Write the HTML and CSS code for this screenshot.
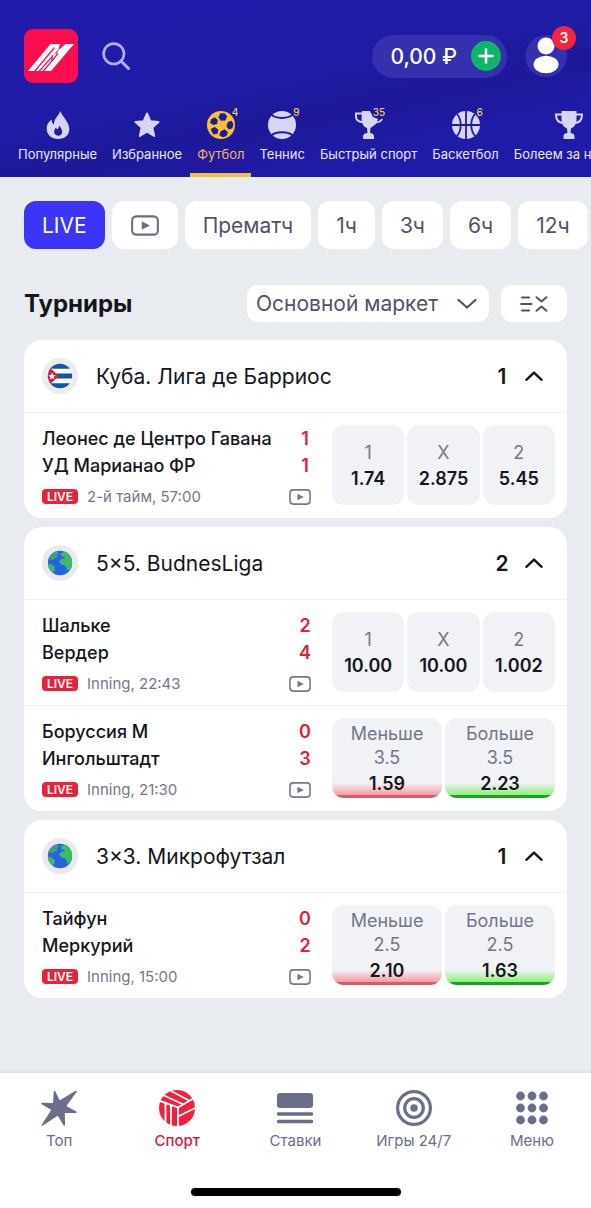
FILE: index.html
```html
<!DOCTYPE html>
<html lang="ru">
<head>
<meta charset="utf-8">
<meta name="viewport" content="width=device-width, initial-scale=1">
<title>Спорт</title>
<link rel="stylesheet" href="styles.css">
</head>
<body>
<svg class="sprite" aria-hidden="true">
  <symbol id="video" viewBox="0 0 30 22">
    <rect x="1.2" y="1.2" width="27.6" height="19.6" rx="4.5" fill="none" stroke="currentColor" stroke-width="2.200"/>
    <path d="M11.5 6.500l8.800 4.500-8.800 4.500z" fill="currentColor"/>
  </symbol>
  <symbol id="up" viewBox="0 0 20 12">
    <path d="M1.500 10.200L10 2.200l8.500 8" fill="none" stroke="currentColor" stroke-width="2.600" stroke-linecap="round" stroke-linejoin="round"/>
  </symbol>
  <symbol id="globe" viewBox="0 0 36 36">
    <circle cx="18" cy="18" r="18" fill="#e8eaf0"/>
    <circle cx="18" cy="18" r="12.200" fill="#2563e2"/>
    <path d="M7.500 12C9.500 8.500 12 6.800 14.500 6.300l2.500 1.500-2 2.400.6 2-2.900 1.200-1.600 1.600-2.600.5z" fill="#3f9f86"/>
    <path d="M18.500 8.500l5-2c3.500 1.800 6.200 5.500 6.600 10l-.4 4.500-2.200 4-2.300.6-.8-3.400-2.200-1.900-3.400-.8-1.700-2.900 2-2.600 3.700-.5-.5-1.700-2.600-.2z" fill="#3fbb66"/>
    <path d="M6 18.500l3.600.8 3.200 3-.2 3.200-1.600 2.200C8 26 6 22.500 6 18.500z" fill="#3fbb66"/>
  </symbol>
</svg>

<header class="top">
  <div class="top__bar">
    <a class="logo" href="#" aria-label="Главная">
      <svg viewBox="0 0 54 54">
        <path d="M4 42L26.500 15H36l-2 6.500L41.500 15H50L27 42z" fill="#fff"/>
        <path d="M10.500 42.500L30.500 18.500M19 42.500l15-18M15 42.500L28.500 27l-1 5M34 21.500L31.500 25" fill="none" stroke="#fc0d50" stroke-width="1.200"/>
      </svg>
    </a>
    <button class="search" aria-label="Поиск">
      <svg viewBox="0 0 28 28"><circle cx="11.800" cy="11.800" r="10.200" fill="none" stroke="currentColor" stroke-width="2.600"/><path d="M19 19l7.500 7.500" stroke="currentColor" stroke-width="3" stroke-linecap="round"/></svg>
    </button>
    <button class="balance">
      <span>0,00 ₽</span>
      <svg viewBox="0 0 30 30"><circle cx="15" cy="15" r="15" fill="#10b56c"/><path d="M15 8.500v13M8.500 15h13" stroke="#fff" stroke-width="2.600" stroke-linecap="round"/></svg>
    </button>
    <button class="profile" aria-label="Профиль">
      <svg viewBox="0 0 42 42"><circle cx="21" cy="11" r="8.500" fill="#fff"/><ellipse cx="21" cy="29.500" rx="12.500" ry="8.800" fill="#fff"/></svg>
      <span class="profile__badge">3</span>
    </button>
  </div>
  <nav class="sports">
    <a class="sport" href="#"><span class="sport__icon">
      <svg viewBox="0 0 28 28"><path fill="currentColor" fill-rule="evenodd" d="M16.500 0C16.800 4 24.800 10 25.300 17.500 25.700 24 20.500 28 14 28S2.300 23.500 2.700 17C3 12.500 5.500 10.200 7.700 8.800c.1 2.700.8 4 2.200 4.700C10 8 13.700 5.500 16.500 0zM15.200 14.800c-.3 1.800-1.200 2.700-1.700 3.700-.8-.5-1.200-1.100-1.400-2-2.800 2.200-2.800 7.700 2 8.200 4.800 0 5.500-5.500 1.100-9.900z"/></svg></span>Популярные</a>
    <a class="sport" href="#"><span class="sport__icon">
      <svg viewBox="0 0 28 28"><path fill="currentColor" stroke="currentColor" stroke-width="2" stroke-linejoin="round" d="M14 2.500l3.300 7.700 8.200.8-6.200 5.500 1.900 8.500L14 20.600 6.800 25l1.900-8.500L2.500 11l8.200-.8z"/></svg></span>Избранное</a>
    <a class="sport sport--active" href="#"><span class="sport__icon">
      <svg viewBox="0 0 28 28"><circle cx="14" cy="14" r="14" fill="currentColor"/><g fill="#1e1a9d"><path d="M13 2.400l4.600-.2 2.700 3-1.900 4.200-4.400.3-2.600-3.300z"/><path d="M4.200 8.200l3.700-2 2.900 2.700-.7 4.200-4 1-3-2.400z"/><path d="M3.600 18l4.300-2 3.400 2.800-.8 4-4.200.7z"/><path d="M13.500 20.500l4-2.200 3.500 3-1.600 4-4.300 1-2.800-2.400z"/><path d="M20.800 11l3.600-1.300 2 3.300-1 4.200-3.600 1.300-2.300-3z"/></g></svg><sup>4</sup></span>Футбол</a>
    <a class="sport" href="#"><span class="sport__icon">
      <svg viewBox="0 0 28 28"><circle cx="14" cy="14" r="14" fill="currentColor"/><path d="M3.500 3.500C7 8 21 8 24.500 3.500M3.500 24.500C7 20 21 20 24.500 24.500" fill="none" stroke="#201ba5" stroke-width="2"/></svg><sup>9</sup></span>Теннис</a>
    <a class="sport" href="#"><span class="sport__icon">
      <svg viewBox="0 0 28 28"><path fill="currentColor" d="M7 0h8l3 6 5 2-2 5-5.500 4-.5 5c2.500 0 4 1.500 4 3.500V28H8v-2.500C8 23.500 10 22 12.500 22l-.5-5C9 16 7 13 6.500 9z"/><path d="M7 2.500H1v3.300c0 3 2.500 5 7 5.500M20 11.500c4 0 6-1 7-3.500" fill="none" stroke="currentColor" stroke-width="2"/></svg><sup>35</sup></span>Быстрый спорт</a>
    <a class="sport" href="#"><span class="sport__icon">
      <svg viewBox="0 0 28 28"><circle cx="14" cy="14" r="14" fill="currentColor"/><path d="M14 0v28M0 14h28M5 3c5 6 5 16 0 22M23 3c-5 6-5 16 0 22" fill="none" stroke="#201ba5" stroke-width="1.800"/></svg><sup>6</sup></span>Баскетбол</a>
    <a class="sport" href="#"><span class="sport__icon">
      <svg viewBox="0 0 28 28"><path fill="currentColor" d="M6.500 0h15v8c0 5-2 8-5.500 9.500l-.5 4.500c2.500 0 4 1.500 4 3.500V28h-11v-2.500c0-2 1.500-3.500 4-3.500l-.5-4.500C8.500 16 6.500 13 6.500 8z"/><path d="M7 3.500H1c0 5 1.500 8.500 8 8.500M21 3.500h6c0 5-1.500 8.500-8 8.500" fill="none" stroke="currentColor" stroke-width="2"/></svg></span>Болеем за наших</a>
  </nav>
</header>

<main class="content">
  <div class="chips">
    <button class="chip chip--active">LIVE</button>
    <button class="chip chip--icon" aria-label="Видео"><svg class="chip__video"><use href="#video"/></svg></button>
    <button class="chip">Прематч</button>
    <button class="chip">1ч</button>
    <button class="chip">3ч</button>
    <button class="chip">6ч</button>
    <button class="chip">12ч</button>
  </div>

  <div class="heading">
    <h1>Турниры</h1>
    <div class="market">
      <select aria-label="Маркет"><option>Основной маркет</option></select>
      <svg viewBox="0 0 20 12"><path d="M1.500 2L10 9.500 18.500 2" fill="none" stroke="currentColor" stroke-width="2.200" stroke-linecap="round" stroke-linejoin="round"/></svg>
    </div>
    <button class="collapse" aria-label="Свернуть все">
      <svg viewBox="0 0 28 18"><path d="M2 2.500h7M1 9h10.500M2 15.500h7M16.500 2.200l5 4.300 5-4.300M16.500 15.800l5-4.300 5 4.300" fill="none" stroke="currentColor" stroke-width="2" stroke-linecap="round" stroke-linejoin="round"/></svg>
    </button>
  </div>

  <section class="card">
    <button class="card__head">
      <svg class="card__flag" viewBox="0 0 36 36"><clipPath id="disc"><circle cx="18" cy="18" r="12.200"/></clipPath><circle cx="18" cy="18" r="18" fill="#ececed"/><g clip-path="url(#disc)"><path fill="#fff" d="M5 5h26v26H5z"/><path fill="#1554ab" d="M5 5h26v5.700H5zM5 15.500h26v5H5zM5 25.300h26V31H5z"/><path fill="#dc1f3a" d="M5 7l12 11L5 29z"/><path fill="#fff" d="M10 14.500l1 2.500 2.700.2-2.100 1.700.7 2.600-2.300-1.400-2.300 1.400.7-2.600-2.100-1.700 2.700-.2z"/></g></svg>
      <span class="card__title">Куба. Лига де Барриос</span><b>1</b><svg class="card__arrow"><use href="#up"/></svg>
    </button>
    <article class="match">
      <div class="match__info">
        <div class="team"><span>Леонес де Центро Гавана</span><b>1</b></div>
        <div class="team"><span>УД Марианао ФР</span><b>1</b></div>
        <div class="status"><i>LIVE</i><span>2-й тайм, 57:00</span><svg><use href="#video"/></svg></div>
      </div>
      <div class="odds">
        <button class="odd"><span>1</span><b>1.74</b></button>
        <button class="odd"><span>X</span><b>2.875</b></button>
        <button class="odd"><span>2</span><b>5.45</b></button>
      </div>
    </article>
  </section>

  <section class="card">
    <button class="card__head">
      <svg class="card__flag"><use href="#globe"/></svg>
      <span class="card__title">5×5. BudnesLiga</span><b>2</b><svg class="card__arrow"><use href="#up"/></svg>
    </button>
    <article class="match">
      <div class="match__info">
        <div class="team"><span>Шальке</span><b>2</b></div>
        <div class="team"><span>Вердер</span><b>4</b></div>
        <div class="status"><i>LIVE</i><span>Inning, 22:43</span><svg><use href="#video"/></svg></div>
      </div>
      <div class="odds">
        <button class="odd"><span>1</span><b>10.00</b></button>
        <button class="odd"><span>X</span><b>10.00</b></button>
        <button class="odd"><span>2</span><b>1.002</b></button>
      </div>
    </article>
    <article class="match">
      <div class="match__info">
        <div class="team"><span>Боруссия М</span><b>0</b></div>
        <div class="team"><span>Ингольштадт</span><b>3</b></div>
        <div class="status"><i>LIVE</i><span>Inning, 21:30</span><svg><use href="#video"/></svg></div>
      </div>
      <div class="odds">
        <button class="odd odd--down"><span>Меньше</span><span>3.5</span><b>1.59</b></button>
        <button class="odd odd--up"><span>Больше</span><span>3.5</span><b>2.23</b></button>
      </div>
    </article>
  </section>

  <section class="card">
    <button class="card__head">
      <svg class="card__flag"><use href="#globe"/></svg>
      <span class="card__title">3×3. Микрофутзал</span><b>1</b><svg class="card__arrow"><use href="#up"/></svg>
    </button>
    <article class="match">
      <div class="match__info">
        <div class="team"><span>Тайфун</span><b>0</b></div>
        <div class="team"><span>Меркурий</span><b>2</b></div>
        <div class="status"><i>LIVE</i><span>Inning, 15:00</span><svg><use href="#video"/></svg></div>
      </div>
      <div class="odds">
        <button class="odd odd--down"><span>Меньше</span><span>2.5</span><b>2.10</b></button>
        <button class="odd odd--up"><span>Больше</span><span>2.5</span><b>1.63</b></button>
      </div>
    </article>
  </section>
</main>

<footer class="bottom">
  <nav class="tabs">
    <a class="tab" href="#"><svg viewBox="0 0 36 36"><path fill="currentColor" stroke="currentColor" stroke-width="1.500" stroke-linejoin="round" d="M13.500 1.500l5 10L35 1.500 24.200 16.200l10.800 6-12 .1.300 12.700-6.300-10.300L1.500 35l9.800-15.300L1 13.500l11.700.3z"/></svg>Топ</a>
    <a class="tab tab--active" href="#"><svg viewBox="0 0 36 36"><circle cx="18" cy="18" r="18" fill="currentColor"/><path d="M1 11l18 6.500L36 7.500M19 17.500V36M5 5.500l19.500 9M12 1l19 10M12 15v20M6.500 13v20M19 26.500L36 18" fill="none" stroke="#fff" stroke-width="1.900"/></svg>Спорт</a>
    <a class="tab" href="#"><svg viewBox="0 0 36 36"><path fill="currentColor" d="M3 3h30q3 0 3 3v9q0 3-3 3H3q-3 0-3-3V6q0-3 3-3z"/><path d="M1.500 24h33M1.500 31.500h33" stroke="currentColor" stroke-width="3.500" stroke-linecap="round"/></svg>Ставки</a>
    <a class="tab" href="#"><svg viewBox="0 0 36 36"><g fill="none" stroke="currentColor" stroke-width="3.200"><circle cx="18" cy="18" r="16.400"/><circle cx="18" cy="18" r="9.300"/></g><circle cx="18" cy="18" r="3.700" fill="currentColor"/></svg>Игры 24/7</a>
    <a class="tab" href="#"><svg viewBox="0 0 36 36"><g fill="currentColor"><circle cx="6.500" cy="6" r="4.400"/><circle cx="18" cy="6" r="4.400"/><circle cx="29.500" cy="6" r="4.400"/><circle cx="6.500" cy="18" r="4.400"/><circle cx="18" cy="18" r="4.400"/><circle cx="29.500" cy="18" r="4.400"/><circle cx="6.500" cy="30" r="4.400"/><circle cx="18" cy="30" r="4.400"/><circle cx="29.500" cy="30" r="4.400"/></g></svg>Меню</a>
  </nav>
  <div class="home-bar"></div>
</footer>
</body>
</html>
```

FILE: styles.css
```css
* { box-sizing: border-box; }

body {
  margin: 0;
  min-height: 100vh;
  display: flex;
  flex-direction: column;
  background: #e8ebef;
  color: #15161b;
  font-family: Inter, "Noto Sans", sans-serif;
}

button, select {
  margin: 0;
  padding: 0;
  border: 0;
  background: none;
  color: inherit;
  font: inherit;
  cursor: pointer;
}

a { color: inherit; text-decoration: none; }
svg { display: block; flex: none; }
.sprite { position: absolute; width: 0; height: 0; }

/* Header */
.top {
  background: linear-gradient(168deg, #201ca9 0%, #201ca8 40%, #1d1999 60%, #201ba6 78%);
  color: #fff;
}

.top__bar {
  display: flex;
  align-items: center;
  padding: 29px 24px 0;
}

.logo {
  border-radius: 9px;
  background: #fc0d50;
}
.logo svg { width: 54px; height: 54px; }

.search { margin: 0 auto 0 24px; color: #b2aef5; }
.search svg { width: 28px; height: 28px; }

.balance {
  display: flex;
  align-items: center;
  gap: 14px;
  height: 43px;
  padding: 0 6px 0 18px;
  border-radius: 22px;
  background: #3530ae;
  font-size: 21px;
  font-weight: 500;
}
.balance svg { width: 30px; height: 30px; }

.profile {
  position: relative;
  margin-left: 18px;
  border-radius: 50%;
  background: #3530ae;
}
.profile svg { width: 42px; height: 42px; }
.profile__badge {
  position: absolute;
  top: -9px;
  right: -9px;
  width: 24px;
  border-radius: 12px;
  background: #f2253c;
  font-size: 14px;
  font-weight: 600;
  line-height: 24px;
}

.sports {
  display: flex;
  gap: 1px;
  padding: 28px 0 0 11px;
  overflow: hidden;
}

.sport {
  display: flex;
  flex: none;
  flex-direction: column;
  align-items: center;
  gap: 6px;
  padding: 0 7px 9px;
  border-bottom: 4px solid transparent;
  color: #e8e7fa;
  font-size: 13px;
  line-height: 19px;
}
.sport--active { border-color: #f3c142; color: #f0b958; }
.sport__icon { position: relative; color: #d6d5f5; }
.sport__icon svg { width: 28px; height: 28px; }
.sport--active .sport__icon { color: #fbc22e; }
.sport sup {
  position: absolute;
  top: -5px;
  left: 25px;
  color: #f3c95c;
  font-size: 10px;
  font-weight: 500;
  line-height: 12px;
}
.sport:nth-child(5) sup { left: 18px; }

/* Content */
.content { flex: 1; padding: 24px 24px 27px; }

.chips {
  display: flex;
  gap: 7px;
  margin-right: -24px;
  overflow: hidden;
}
.chip {
  flex: none;
  height: 48px;
  padding: 0 18px;
  border-radius: 12px;
  background: #fff;
  color: #505369;
  font-size: 21px;
}
.chip--active { background: #3c34f6; color: #fff; }
.chip--icon { padding: 0 19px; }
.chip__video { width: 28px; height: 21px; color: #6a6d81; }

.heading {
  display: flex;
  align-items: center;
  gap: 12px;
  margin: 36px 0 18px;
}
.heading h1 {
  flex: 1;
  margin: 0;
  font-size: 24px;
  font-weight: 700;
  line-height: 36px;
}

.market, .collapse {
  border-radius: 11px;
  background: #fff;
  color: #505369;
}
.market { position: relative; }
.market select {
  width: 242px;
  height: 37px;
  padding: 0 9px;
  appearance: none;
  font-size: 21px;
}
.market svg {
  position: absolute;
  top: 13px;
  right: 12px;
  width: 20px;
  height: 12px;
  pointer-events: none;
}
.collapse {
  display: grid;
  place-items: center;
  width: 66px;
  height: 37px;
}
.collapse svg { width: 28px; height: 18px; }

.card { border-radius: 18px; background: #fff; }
.card + .card { margin-top: 9px; }

.card__head {
  display: flex;
  align-items: center;
  width: 100%;
  height: 72px;
  padding: 0 24px 0 18px;
  font-size: 21px;
  text-align: left;
}
.card__flag { width: 36px; height: 36px; }
.card__title { flex: 1; padding-left: 18px; }
.card__head b { width: 14px; font-weight: 600; text-align: center; }
.card__arrow { width: 18px; height: 12px; margin-left: 16px; }

.match {
  display: flex;
  gap: 21px;
  padding: 12px 12px 13px 18px;
  border-top: 1px solid #eff0f3;
}
.match__info { flex: 1; min-width: 0; }

.team {
  display: flex;
  justify-content: space-between;
  font-size: 18px;
  font-weight: 500;
  line-height: 27px;
}
.team b {
  width: 12px;
  color: #dd1f3b;
  font-weight: 600;
  text-align: center;
}

.status {
  display: flex;
  align-items: center;
  gap: 9px;
  padding-top: 9px;
  color: #74788d;
  font-size: 15px;
  line-height: 17px;
}
.status i {
  width: 36px;
  border-radius: 4px;
  background: #e9223b;
  color: #fff;
  font-size: 12px;
  font-style: normal;
  font-weight: 600;
  line-height: 15px;
  text-align: center;
}
.status svg { width: 22px; height: 16px; margin-left: auto; }

.odds {
  display: flex;
  flex: none;
  gap: 3px;
  width: 223px;
}
.odd {
  display: flex;
  flex: 1 1 0;
  flex-direction: column;
  justify-content: center;
  padding-top: 4px;
  border-radius: 12px;
  background: #f1f2f6;
  color: #72768b;
  font-size: 18px;
  line-height: 24px;
  text-align: center;
}
.odd span, .odd b { width: 100%; }
.odd b { color: #15161b; font-weight: 600; line-height: 28px; }
.odd--down { background: linear-gradient(to top, #dc596b 3px, #f49aa4 3px, #f1f2f6 15px); }
.odd--up { background: linear-gradient(to top, #18a51c 3px, #8cf07c 3px, #f1f2f6 15px); }

/* Bottom navigation */
.bottom { background: #fff; box-shadow: 0 -1px 4px #d5d9de; }
.tabs {
  display: grid;
  grid-template-columns: repeat(5, 1fr);
  padding-top: 17px;
}
.tab {
  display: flex;
  flex-direction: column;
  align-items: center;
  gap: 5px;
  color: #696e8b;
  font-size: 15px;
  line-height: 20px;
}
.tab svg { width: 36px; height: 36px; }
.tab--active { color: #d71b36; font-weight: 500; }
.tab--active svg { color: #f2203a; }

.home-bar {
  width: 210px;
  height: 8px;
  margin: 37px auto 12px;
  border-radius: 4px;
  background: #000;
}
```
